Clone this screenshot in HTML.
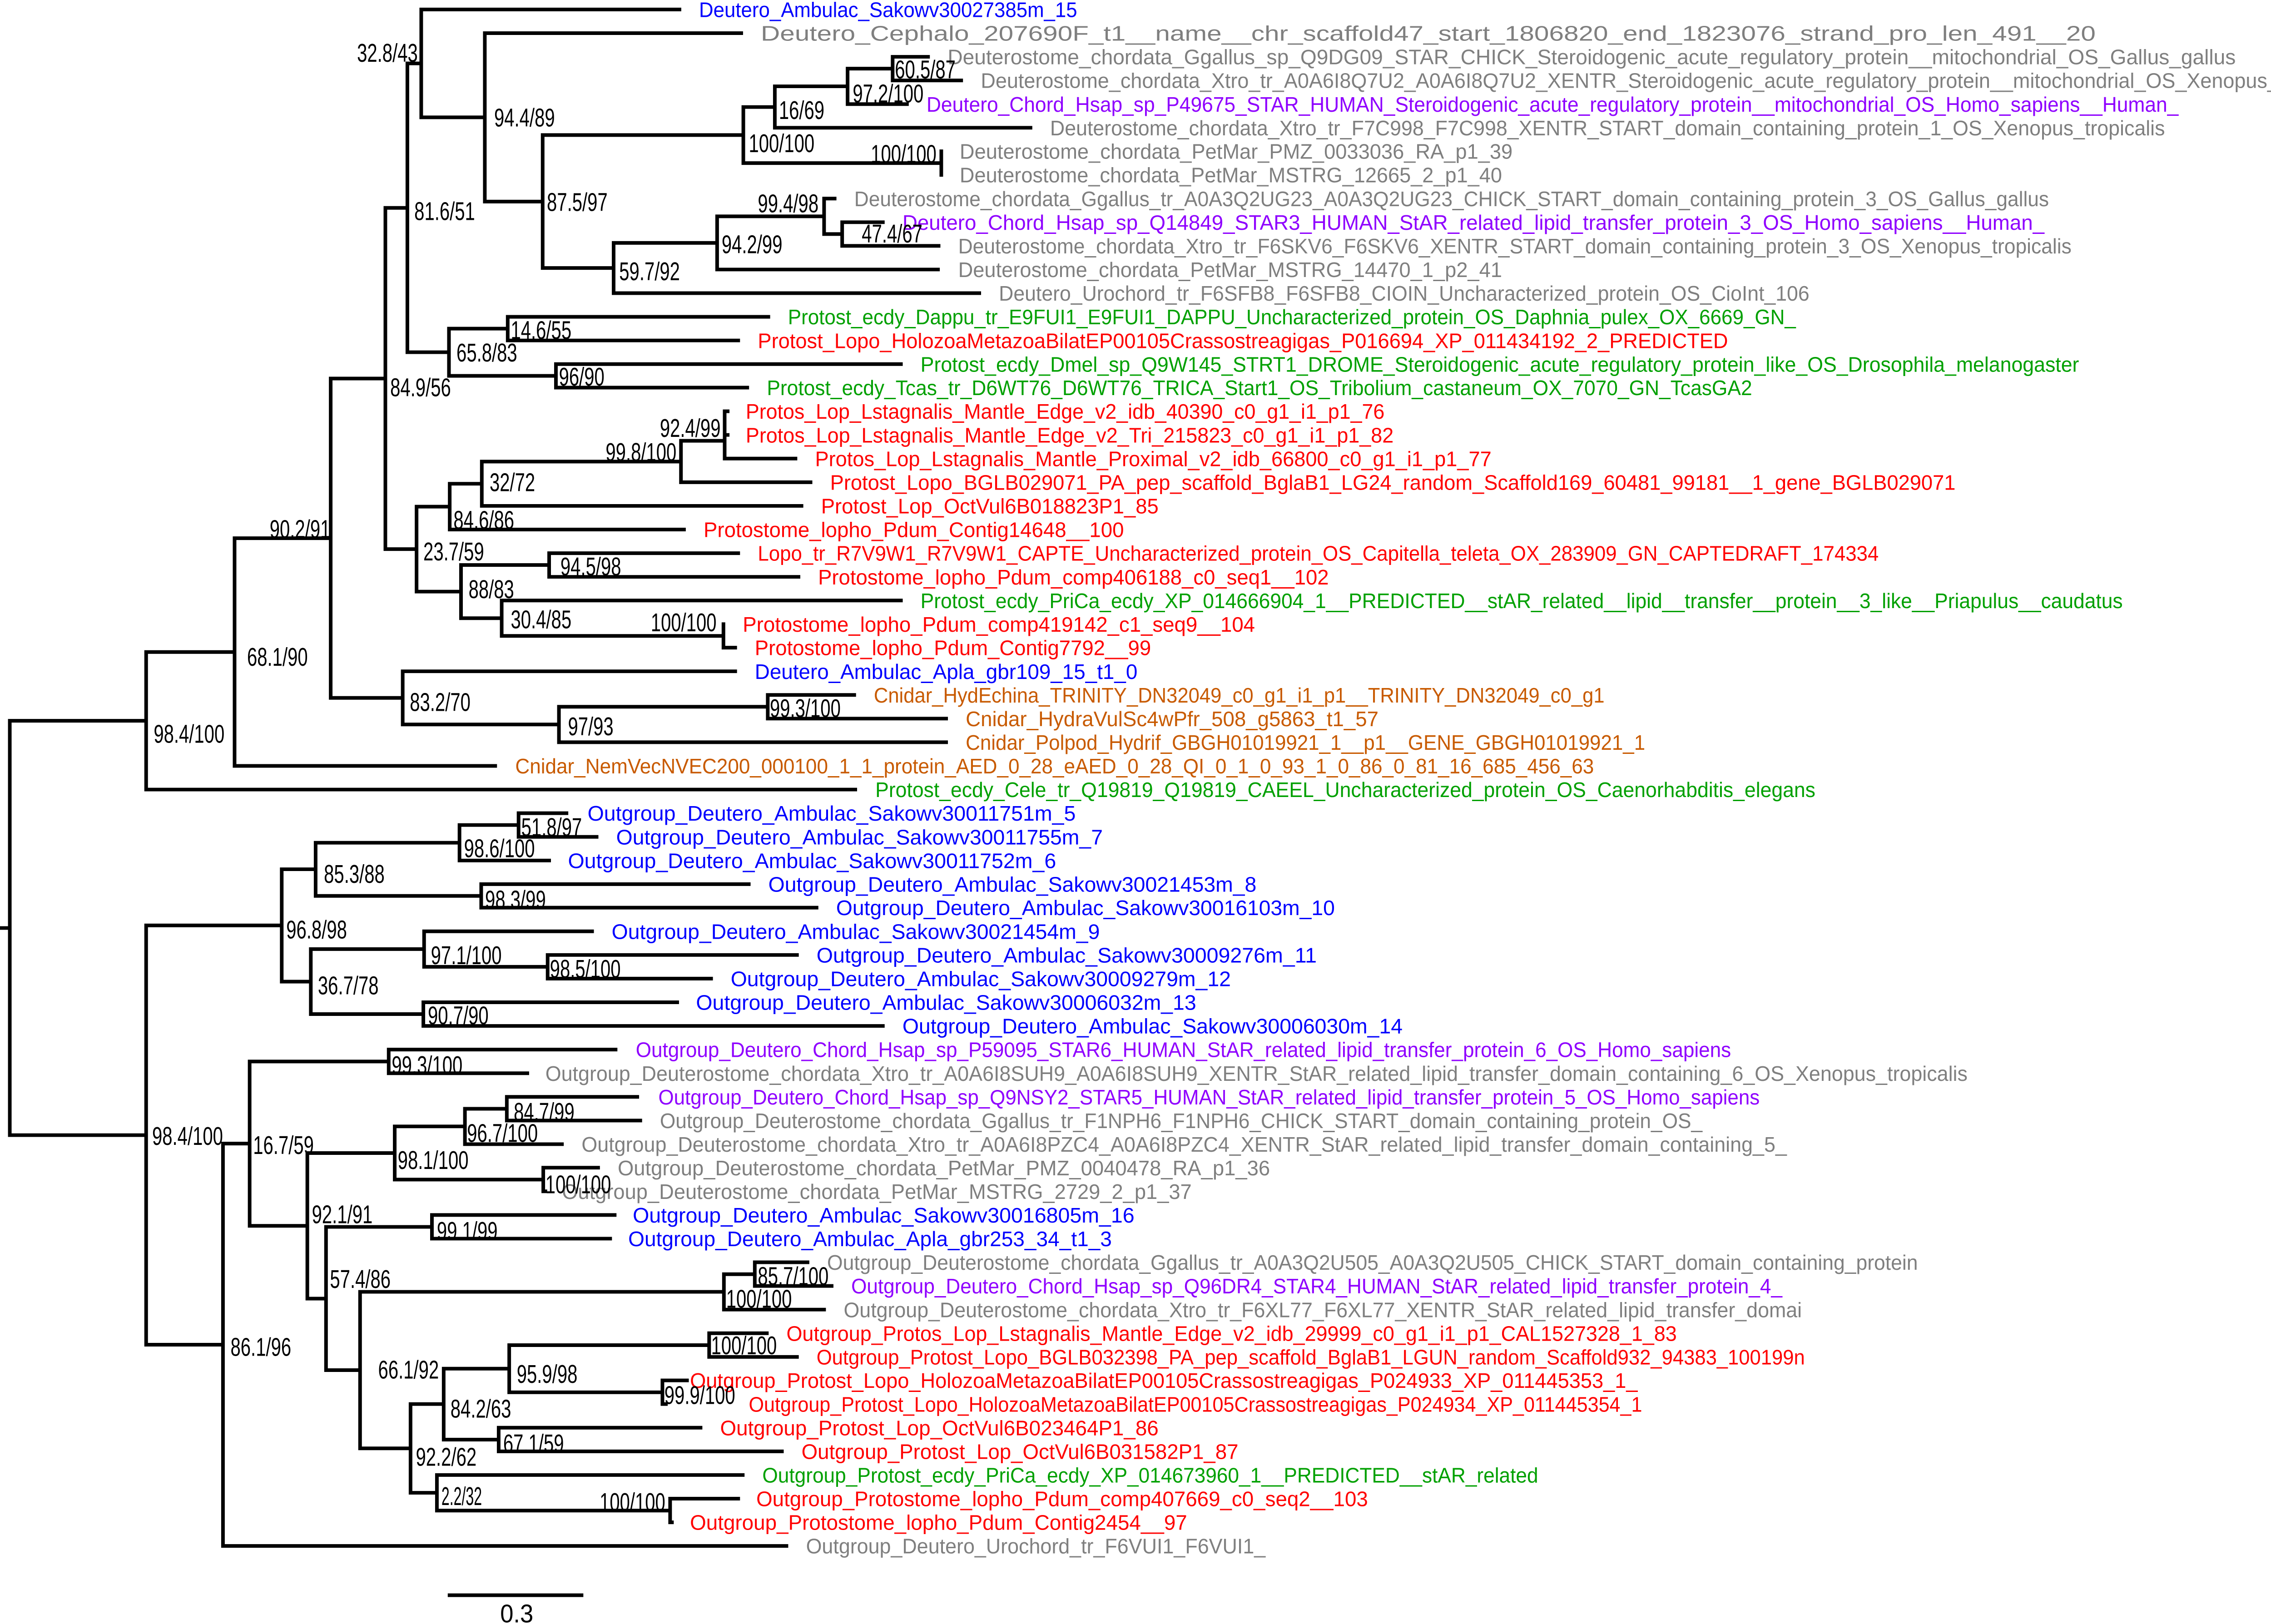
<!DOCTYPE html>
<html><head><meta charset="utf-8"><style>
html,body{margin:0;padding:0;background:#fff;}
svg{display:block;}
.l{font-family:"Liberation Sans",Arial,sans-serif;font-size:14px;}
.b{font-family:"Liberation Sans",Arial,sans-serif;font-size:17px;fill:#000;}
.bl{fill:#0000ff}.gr{fill:#7f7f7f}.pu{fill:#8f00ff}.gn{fill:#00a000}.rd{fill:#ff0000}.or{fill:#c85a00}
</style></head><body>
<svg width="5201" height="3576" viewBox="0 0 1568 1078" preserveAspectRatio="none" xmlns="http://www.w3.org/2000/svg">
<rect width="1568" height="1078" fill="#fff"/>
<path fill="none" stroke="#000" stroke-width="2.4" stroke-linecap="square" d="
M6.5 478.45V753.5M0 616H6.5
M97 432.8V524.1M155.7 357.25V508.4M219.5 251.25V463.25M255.8 138V364.5M270.4 42.1V233.8M279.6 6.3V77.9M321.8 22V133.8M360.2 89.65V177.9M493.4 71.05V108.25M514.3 57.3V84.8M562.6 45.55V69.1M592.5 37.7V53.4M624.8 100.4V116.1M407.3 161.25V194.6M476 143.6V178.9M547 131.8V155.35M559 147.5V163.2M298 218.15V249.5M337 210.3V226M369 241.7V257.3M276.5 336.3V392.7M298.5 321.1V351.5M319.8 306.4V335.8M452 292.6V320.1M481 273V304.4M306 375.05V410.35M364.5 367.2V382.9M333 398.6V422.1M480.2 414.3V429.9M267.3 445.6V480.9M371 469.15V492.7M509.6 461.3V477
M6.5 478.45H97M97 432.8H155.7M97 524.1H567.7M155.7 357.25H219.5M155.7 508.4H328.7M219.5 251.25H255.8M219.5 463.25H267.3M255.8 138H270.4M255.8 364.5H276.5M270.4 42.1H279.6M270.4 233.8H298M279.6 6.3H451M279.6 77.9H321.8M321.8 22H492M321.8 133.8H360.2M360.2 89.65H493.4M360.2 177.9H407.3M493.4 71.05H514.3M493.4 108.25H624.8M514.3 57.3H562.6M514.3 84.8H684M562.6 45.55H592.5M562.6 69.1H602M592.5 37.7H616M592.5 53.4H638M407.3 161.25H476M407.3 194.6H650M476 143.6H547M476 178.9H622.6M547 131.8H554M547 155.35H559M559 147.5H586M559 163.2H623M298 218.15H337M298 249.5H369M337 210.3H510M337 226H490M369 241.7H598M369 257.3H496M276.5 336.3H298.5M276.5 392.7H306M298.5 321.1H319.8M298.5 351.5H454M319.8 306.4H452M319.8 335.8H532M452 292.6H481M452 320.1H538M481 304.4H528M481 273H483M481 288.7H483M306 375.05H364.5M306 410.35H333M364.5 367.2H490M364.5 382.9H530M333 398.6H598M333 422.1H480.2M480.2 429.9H488M267.3 445.6H488M267.3 480.9H371M371 469.15H509.6M371 492.7H628M509.6 461.3H567M509.6 477H628
M97 614.3V892.6M187 577V651.6M209.5 559.4V594.7M305 547.65V571.2M344.2 539.8V555.5M319.4 586.9V602.5M206.3 630V673.15M281.5 618.2V641.75M363.5 633.9V649.6M281 665.3V681M148 759.1V1026.2M165.7 704.6V813.7M258 696.7V712.4M204 765.4V862M262 747.7V783M308.6 736V759.5M336.4 728.1V743.8M360.6 775.1V790.8M216.4 814.4V909.5M286.7 806.5V822.2M239 857.5V961.4M480.5 845.8V869.3M501 837.9V853.6M272.5 932V990.9M294.5 908.5V955.6M338 892.9V924.2M470.7 885V900.7M439.7 916.3V932M331 947.7V963.4M290 979.1V1002.7M444.8 994.8V1010.5
M6.5 753.5H97M97 614.3H187M97 892.6H148M187 577H209.5M187 651.6H206.3M209.5 559.4H305M209.5 594.7H319.4M305 547.65H344.2M305 571.2H364.5M344.2 539.8H376M344.2 555.5H396M319.4 586.9H497M319.4 602.5H542M206.3 630H281.5M206.3 673.15H281M281.5 618.2H393M281.5 641.75H363.5M363.5 633.9H529M363.5 649.6H472M281 665.3H449.5M281 681H586M148 759.1H165.7M148 1026.2H522M165.7 704.6H258M165.7 813.7H204M258 696.7H408.6M258 712.4H350M204 765.4H262M204 862H216.4M262 747.7H308.6M262 783H360.6M308.6 736H336.4M308.6 759.5H373M336.4 728.1H423M336.4 743.8H425M360.6 775.1H397M360.6 790.8H362M216.4 814.4H286.7M216.4 909.5H239M286.7 806.5H408M286.7 822.2H405M239 857.5H480.5M239 961.4H272.5M480.5 845.8H501M480.5 869.3H547M501 837.9H536M501 853.6H552M272.5 932H294.5M272.5 990.9H290M294.5 908.5H338M294.5 955.6H331M338 892.9H470.7M338 924.2H439.7M470.7 885H509M470.7 900.7H529M439.7 916.3H456M439.7 932H442M331 947.7H465M331 963.4H519M290 979.1H493M290 1002.7H444.8M444.8 994.8H490M444.8 1010.5H446
M298.4 1058.9H386"/>
<g class="l">
<text class="bl" x="464" y="11.3" textLength="251" lengthAdjust="spacingAndGlyphs">Deutero_Ambulac_Sakowv30027385m_15</text>
<text class="gr" x="505" y="27" textLength="886" lengthAdjust="spacingAndGlyphs">Deutero_Cephalo_207690F_t1__name__chr_scaffold47_start_1806820_end_1823076_strand_pro_len_491__20</text>
<text class="gr" x="629" y="42.7" textLength="855" lengthAdjust="spacingAndGlyphs">Deuterostome_chordata_Ggallus_sp_Q9DG09_STAR_CHICK_Steroidogenic_acute_regulatory_protein__mitochondrial_OS_Gallus_gallus</text>
<text class="gr" x="651" y="58.4" textLength="915" lengthAdjust="spacingAndGlyphs">Deuterostome_chordata_Xtro_tr_A0A6I8Q7U2_A0A6I8Q7U2_XENTR_Steroidogenic_acute_regulatory_protein__mitochondrial_OS_Xenopus_tropicalis</text>
<text class="pu" x="615" y="74.1" textLength="831" lengthAdjust="spacingAndGlyphs">Deutero_Chord_Hsap_sp_P49675_STAR_HUMAN_Steroidogenic_acute_regulatory_protein__mitochondrial_OS_Homo_sapiens__Human_</text>
<text class="gr" x="697" y="89.8" textLength="740" lengthAdjust="spacingAndGlyphs">Deuterostome_chordata_Xtro_tr_F7C998_F7C998_XENTR_START_domain_containing_protein_1_OS_Xenopus_tropicalis</text>
<text class="gr" x="637" y="105.4" textLength="367" lengthAdjust="spacingAndGlyphs">Deuterostome_chordata_PetMar_PMZ_0033036_RA_p1_39</text>
<text class="gr" x="637" y="121.1" textLength="360" lengthAdjust="spacingAndGlyphs">Deuterostome_chordata_PetMar_MSTRG_12665_2_p1_40</text>
<text class="gr" x="567" y="136.8" textLength="793" lengthAdjust="spacingAndGlyphs">Deuterostome_chordata_Ggallus_tr_A0A3Q2UG23_A0A3Q2UG23_CHICK_START_domain_containing_protein_3_OS_Gallus_gallus</text>
<text class="pu" x="599" y="152.5" textLength="758" lengthAdjust="spacingAndGlyphs">Deutero_Chord_Hsap_sp_Q14849_STAR3_HUMAN_StAR_related_lipid_transfer_protein_3_OS_Homo_sapiens__Human_</text>
<text class="gr" x="636" y="168.2" textLength="739" lengthAdjust="spacingAndGlyphs">Deuterostome_chordata_Xtro_tr_F6SKV6_F6SKV6_XENTR_START_domain_containing_protein_3_OS_Xenopus_tropicalis</text>
<text class="gr" x="636" y="183.9" textLength="361" lengthAdjust="spacingAndGlyphs">Deuterostome_chordata_PetMar_MSTRG_14470_1_p2_41</text>
<text class="gr" x="663" y="199.6" textLength="538" lengthAdjust="spacingAndGlyphs">Deutero_Urochord_tr_F6SFB8_F6SFB8_CIOIN_Uncharacterized_protein_OS_CioInt_106</text>
<text class="gn" x="523" y="215.3" textLength="669" lengthAdjust="spacingAndGlyphs">Protost_ecdy_Dappu_tr_E9FUI1_E9FUI1_DAPPU_Uncharacterized_protein_OS_Daphnia_pulex_OX_6669_GN_</text>
<text class="rd" x="503" y="231" textLength="644" lengthAdjust="spacingAndGlyphs">Protost_Lopo_HolozoaMetazoaBilatEP00105Crassostreagigas_P016694_XP_011434192_2_PREDICTED</text>
<text class="gn" x="611" y="246.7" textLength="769" lengthAdjust="spacingAndGlyphs">Protost_ecdy_Dmel_sp_Q9W145_STRT1_DROME_Steroidogenic_acute_regulatory_protein_like_OS_Drosophila_melanogaster</text>
<text class="gn" x="509" y="262.3" textLength="654" lengthAdjust="spacingAndGlyphs">Protost_ecdy_Tcas_tr_D6WT76_D6WT76_TRICA_Start1_OS_Tribolium_castaneum_OX_7070_GN_TcasGA2</text>
<text class="rd" x="495" y="278" textLength="424" lengthAdjust="spacingAndGlyphs">Protos_Lop_Lstagnalis_Mantle_Edge_v2_idb_40390_c0_g1_i1_p1_76</text>
<text class="rd" x="495" y="293.7" textLength="430" lengthAdjust="spacingAndGlyphs">Protos_Lop_Lstagnalis_Mantle_Edge_v2_Tri_215823_c0_g1_i1_p1_82</text>
<text class="rd" x="541" y="309.4" textLength="449" lengthAdjust="spacingAndGlyphs">Protos_Lop_Lstagnalis_Mantle_Proximal_v2_idb_66800_c0_g1_i1_p1_77</text>
<text class="rd" x="551" y="325.1" textLength="747" lengthAdjust="spacingAndGlyphs">Protost_Lopo_BGLB029071_PA_pep_scaffold_BglaB1_LG24_random_Scaffold169_60481_99181__1_gene_BGLB029071</text>
<text class="rd" x="545" y="340.8" textLength="224" lengthAdjust="spacingAndGlyphs">Protost_Lop_OctVul6B018823P1_85</text>
<text class="rd" x="467" y="356.5" textLength="279" lengthAdjust="spacingAndGlyphs">Protostome_lopho_Pdum_Contig14648__100</text>
<text class="rd" x="503" y="372.2" textLength="744" lengthAdjust="spacingAndGlyphs">Lopo_tr_R7V9W1_R7V9W1_CAPTE_Uncharacterized_protein_OS_Capitella_teleta_OX_283909_GN_CAPTEDRAFT_174334</text>
<text class="rd" x="543" y="387.9" textLength="339" lengthAdjust="spacingAndGlyphs">Protostome_lopho_Pdum_comp406188_c0_seq1__102</text>
<text class="gn" x="611" y="403.6" textLength="798" lengthAdjust="spacingAndGlyphs">Protost_ecdy_PriCa_ecdy_XP_014666904_1__PREDICTED__stAR_related__lipid__transfer__protein__3_like__Priapulus__caudatus</text>
<text class="rd" x="493" y="419.3" textLength="340" lengthAdjust="spacingAndGlyphs">Protostome_lopho_Pdum_comp419142_c1_seq9__104</text>
<text class="rd" x="501" y="434.9" textLength="263" lengthAdjust="spacingAndGlyphs">Protostome_lopho_Pdum_Contig7792__99</text>
<text class="bl" x="501" y="450.6" textLength="254" lengthAdjust="spacingAndGlyphs">Deutero_Ambulac_Apla_gbr109_15_t1_0</text>
<text class="or" x="580" y="466.3" textLength="485" lengthAdjust="spacingAndGlyphs">Cnidar_HydEchina_TRINITY_DN32049_c0_g1_i1_p1__TRINITY_DN32049_c0_g1</text>
<text class="or" x="641" y="482" textLength="274" lengthAdjust="spacingAndGlyphs">Cnidar_HydraVulSc4wPfr_508_g5863_t1_57</text>
<text class="or" x="641" y="497.7" textLength="451" lengthAdjust="spacingAndGlyphs">Cnidar_Polpod_Hydrif_GBGH01019921_1__p1__GENE_GBGH01019921_1</text>
<text class="or" x="342" y="513.4" textLength="716" lengthAdjust="spacingAndGlyphs">Cnidar_NemVecNVEC200_000100_1_1_protein_AED_0_28_eAED_0_28_QI_0_1_0_93_1_0_86_0_81_16_685_456_63</text>
<text class="gn" x="581" y="529.1" textLength="624" lengthAdjust="spacingAndGlyphs">Protost_ecdy_Cele_tr_Q19819_Q19819_CAEEL_Uncharacterized_protein_OS_Caenorhabditis_elegans</text>
<text class="bl" x="390" y="544.8" textLength="324" lengthAdjust="spacingAndGlyphs">Outgroup_Deutero_Ambulac_Sakowv30011751m_5</text>
<text class="bl" x="409" y="560.5" textLength="323" lengthAdjust="spacingAndGlyphs">Outgroup_Deutero_Ambulac_Sakowv30011755m_7</text>
<text class="bl" x="377" y="576.2" textLength="324" lengthAdjust="spacingAndGlyphs">Outgroup_Deutero_Ambulac_Sakowv30011752m_6</text>
<text class="bl" x="510" y="591.9" textLength="324" lengthAdjust="spacingAndGlyphs">Outgroup_Deutero_Ambulac_Sakowv30021453m_8</text>
<text class="bl" x="555" y="607.5" textLength="331" lengthAdjust="spacingAndGlyphs">Outgroup_Deutero_Ambulac_Sakowv30016103m_10</text>
<text class="bl" x="406" y="623.2" textLength="324" lengthAdjust="spacingAndGlyphs">Outgroup_Deutero_Ambulac_Sakowv30021454m_9</text>
<text class="bl" x="542" y="638.9" textLength="332" lengthAdjust="spacingAndGlyphs">Outgroup_Deutero_Ambulac_Sakowv30009276m_11</text>
<text class="bl" x="485" y="654.6" textLength="332" lengthAdjust="spacingAndGlyphs">Outgroup_Deutero_Ambulac_Sakowv30009279m_12</text>
<text class="bl" x="462" y="670.3" textLength="332" lengthAdjust="spacingAndGlyphs">Outgroup_Deutero_Ambulac_Sakowv30006032m_13</text>
<text class="bl" x="599" y="686" textLength="332" lengthAdjust="spacingAndGlyphs">Outgroup_Deutero_Ambulac_Sakowv30006030m_14</text>
<text class="pu" x="422" y="701.7" textLength="727" lengthAdjust="spacingAndGlyphs">Outgroup_Deutero_Chord_Hsap_sp_P59095_STAR6_HUMAN_StAR_related_lipid_transfer_protein_6_OS_Homo_sapiens</text>
<text class="gr" x="362" y="717.4" textLength="944" lengthAdjust="spacingAndGlyphs">Outgroup_Deuterostome_chordata_Xtro_tr_A0A6I8SUH9_A0A6I8SUH9_XENTR_StAR_related_lipid_transfer_domain_containing_6_OS_Xenopus_tropicalis</text>
<text class="pu" x="437" y="733.1" textLength="731" lengthAdjust="spacingAndGlyphs">Outgroup_Deutero_Chord_Hsap_sp_Q9NSY2_STAR5_HUMAN_StAR_related_lipid_transfer_protein_5_OS_Homo_sapiens</text>
<text class="gr" x="438" y="748.8" textLength="692" lengthAdjust="spacingAndGlyphs">Outgroup_Deuterostome_chordata_Ggallus_tr_F1NPH6_F1NPH6_CHICK_START_domain_containing_protein_OS_</text>
<text class="gr" x="386" y="764.5" textLength="800" lengthAdjust="spacingAndGlyphs">Outgroup_Deuterostome_chordata_Xtro_tr_A0A6I8PZC4_A0A6I8PZC4_XENTR_StAR_related_lipid_transfer_domain_containing_5_</text>
<text class="gr" x="410" y="780.1" textLength="433" lengthAdjust="spacingAndGlyphs">Outgroup_Deuterostome_chordata_PetMar_PMZ_0040478_RA_p1_36</text>
<text class="gr" x="373" y="795.8" textLength="418" lengthAdjust="spacingAndGlyphs">Outgroup_Deuterostome_chordata_PetMar_MSTRG_2729_2_p1_37</text>
<text class="bl" x="420" y="811.5" textLength="333" lengthAdjust="spacingAndGlyphs">Outgroup_Deutero_Ambulac_Sakowv30016805m_16</text>
<text class="bl" x="417" y="827.2" textLength="321" lengthAdjust="spacingAndGlyphs">Outgroup_Deutero_Ambulac_Apla_gbr253_34_t1_3</text>
<text class="gr" x="549" y="842.9" textLength="724" lengthAdjust="spacingAndGlyphs">Outgroup_Deuterostome_chordata_Ggallus_tr_A0A3Q2U505_A0A3Q2U505_CHICK_START_domain_containing_protein</text>
<text class="pu" x="565" y="858.6" textLength="618" lengthAdjust="spacingAndGlyphs">Outgroup_Deutero_Chord_Hsap_sp_Q96DR4_STAR4_HUMAN_StAR_related_lipid_transfer_protein_4_</text>
<text class="gr" x="560" y="874.3" textLength="636" lengthAdjust="spacingAndGlyphs">Outgroup_Deuterostome_chordata_Xtro_tr_F6XL77_F6XL77_XENTR_StAR_related_lipid_transfer_domai</text>
<text class="rd" x="522" y="890" textLength="591" lengthAdjust="spacingAndGlyphs">Outgroup_Protos_Lop_Lstagnalis_Mantle_Edge_v2_idb_29999_c0_g1_i1_p1_CAL1527328_1_83</text>
<text class="rd" x="542" y="905.7" textLength="656" lengthAdjust="spacingAndGlyphs">Outgroup_Protost_Lopo_BGLB032398_PA_pep_scaffold_BglaB1_LGUN_random_Scaffold932_94383_100199n</text>
<text class="rd" x="458" y="921.3" textLength="629" lengthAdjust="spacingAndGlyphs">Outgroup_Protost_Lopo_HolozoaMetazoaBilatEP00105Crassostreagigas_P024933_XP_011445353_1_</text>
<text class="rd" x="497" y="937" textLength="593" lengthAdjust="spacingAndGlyphs">Outgroup_Protost_Lopo_HolozoaMetazoaBilatEP00105Crassostreagigas_P024934_XP_011445354_1</text>
<text class="rd" x="478" y="952.7" textLength="291" lengthAdjust="spacingAndGlyphs">Outgroup_Protost_Lop_OctVul6B023464P1_86</text>
<text class="rd" x="532" y="968.4" textLength="290" lengthAdjust="spacingAndGlyphs">Outgroup_Protost_Lop_OctVul6B031582P1_87</text>
<text class="gn" x="506" y="984.1" textLength="515" lengthAdjust="spacingAndGlyphs">Outgroup_Protost_ecdy_PriCa_ecdy_XP_014673960_1__PREDICTED__stAR_related</text>
<text class="rd" x="502" y="999.8" textLength="406" lengthAdjust="spacingAndGlyphs">Outgroup_Protostome_lopho_Pdum_comp407669_c0_seq2__103</text>
<text class="rd" x="458" y="1015.5" textLength="330" lengthAdjust="spacingAndGlyphs">Outgroup_Protostome_lopho_Pdum_Contig2454__97</text>
<text class="gr" x="535" y="1031.2" textLength="305" lengthAdjust="spacingAndGlyphs">Outgroup_Deutero_Urochord_tr_F6VUI1_F6VUI1_</text>
</g>
<g class="b">
<text x="237" y="41" textLength="40.3" lengthAdjust="spacingAndGlyphs">32.8/43</text>
<text x="328" y="84" textLength="40.3" lengthAdjust="spacingAndGlyphs">94.4/89</text>
<text x="275" y="146" textLength="40.3" lengthAdjust="spacingAndGlyphs">81.6/51</text>
<text x="363" y="140" textLength="40.3" lengthAdjust="spacingAndGlyphs">87.5/97</text>
<text x="517" y="79" textLength="30.2" lengthAdjust="spacingAndGlyphs">16/69</text>
<text x="497" y="101" textLength="43.6" lengthAdjust="spacingAndGlyphs">100/100</text>
<text x="594" y="52" textLength="40.3" lengthAdjust="spacingAndGlyphs">60.5/87</text>
<text x="566" y="68" textLength="47" lengthAdjust="spacingAndGlyphs">97.2/100</text>
<text x="578" y="108" textLength="43.6" lengthAdjust="spacingAndGlyphs">100/100</text>
<text x="503" y="141" textLength="40.3" lengthAdjust="spacingAndGlyphs">99.4/98</text>
<text x="572" y="161" textLength="40.3" lengthAdjust="spacingAndGlyphs">47.4/67</text>
<text x="479" y="168" textLength="40.3" lengthAdjust="spacingAndGlyphs">94.2/99</text>
<text x="411" y="186" textLength="40.3" lengthAdjust="spacingAndGlyphs">59.7/92</text>
<text x="339" y="225" textLength="40.3" lengthAdjust="spacingAndGlyphs">14.6/55</text>
<text x="303" y="240" textLength="40.3" lengthAdjust="spacingAndGlyphs">65.8/83</text>
<text x="371" y="256" textLength="30.2" lengthAdjust="spacingAndGlyphs">96/90</text>
<text x="259" y="263" textLength="40.3" lengthAdjust="spacingAndGlyphs">84.9/56</text>
<text x="438" y="290" textLength="40.3" lengthAdjust="spacingAndGlyphs">92.4/99</text>
<text x="402" y="306" textLength="47" lengthAdjust="spacingAndGlyphs">99.8/100</text>
<text x="325" y="326" textLength="30.2" lengthAdjust="spacingAndGlyphs">32/72</text>
<text x="301" y="351" textLength="40.3" lengthAdjust="spacingAndGlyphs">84.6/86</text>
<text x="281" y="372" textLength="40.3" lengthAdjust="spacingAndGlyphs">23.7/59</text>
<text x="372" y="382" textLength="40.3" lengthAdjust="spacingAndGlyphs">94.5/98</text>
<text x="311" y="397" textLength="30.2" lengthAdjust="spacingAndGlyphs">88/83</text>
<text x="339" y="417" textLength="40.3" lengthAdjust="spacingAndGlyphs">30.4/85</text>
<text x="432" y="419" textLength="43.6" lengthAdjust="spacingAndGlyphs">100/100</text>
<text x="179" y="357" textLength="40.3" lengthAdjust="spacingAndGlyphs">90.2/91</text>
<text x="164" y="442" textLength="40.3" lengthAdjust="spacingAndGlyphs">68.1/90</text>
<text x="272" y="472" textLength="40.3" lengthAdjust="spacingAndGlyphs">83.2/70</text>
<text x="511" y="476" textLength="47" lengthAdjust="spacingAndGlyphs">99.3/100</text>
<text x="377" y="488" textLength="30.2" lengthAdjust="spacingAndGlyphs">97/93</text>
<text x="102" y="493" textLength="47" lengthAdjust="spacingAndGlyphs">98.4/100</text>
<text x="346" y="555" textLength="40.3" lengthAdjust="spacingAndGlyphs">51.8/97</text>
<text x="308" y="569" textLength="47" lengthAdjust="spacingAndGlyphs">98.6/100</text>
<text x="215" y="586" textLength="40.3" lengthAdjust="spacingAndGlyphs">85.3/88</text>
<text x="322" y="603" textLength="40.3" lengthAdjust="spacingAndGlyphs">98.3/99</text>
<text x="190" y="623" textLength="40.3" lengthAdjust="spacingAndGlyphs">96.8/98</text>
<text x="286" y="640" textLength="47" lengthAdjust="spacingAndGlyphs">97.1/100</text>
<text x="365" y="649" textLength="47" lengthAdjust="spacingAndGlyphs">98.5/100</text>
<text x="211" y="660" textLength="40.3" lengthAdjust="spacingAndGlyphs">36.7/78</text>
<text x="284" y="680" textLength="40.3" lengthAdjust="spacingAndGlyphs">90.7/90</text>
<text x="260" y="713" textLength="47" lengthAdjust="spacingAndGlyphs">99.3/100</text>
<text x="341" y="744" textLength="40.3" lengthAdjust="spacingAndGlyphs">84.7/99</text>
<text x="310" y="758" textLength="47" lengthAdjust="spacingAndGlyphs">96.7/100</text>
<text x="168" y="766" textLength="40.3" lengthAdjust="spacingAndGlyphs">16.7/59</text>
<text x="264" y="776" textLength="47" lengthAdjust="spacingAndGlyphs">98.1/100</text>
<text x="362" y="792" textLength="43.6" lengthAdjust="spacingAndGlyphs">100/100</text>
<text x="101" y="760" textLength="47" lengthAdjust="spacingAndGlyphs">98.4/100</text>
<text x="207" y="812" textLength="40.3" lengthAdjust="spacingAndGlyphs">92.1/91</text>
<text x="290" y="823" textLength="40.3" lengthAdjust="spacingAndGlyphs">99.1/99</text>
<text x="219" y="855" textLength="40.3" lengthAdjust="spacingAndGlyphs">57.4/86</text>
<text x="503" y="853" textLength="47" lengthAdjust="spacingAndGlyphs">85.7/100</text>
<text x="482" y="868" textLength="43.6" lengthAdjust="spacingAndGlyphs">100/100</text>
<text x="153" y="900" textLength="40.3" lengthAdjust="spacingAndGlyphs">86.1/96</text>
<text x="472" y="899" textLength="43.6" lengthAdjust="spacingAndGlyphs">100/100</text>
<text x="251" y="915" textLength="40.3" lengthAdjust="spacingAndGlyphs">66.1/92</text>
<text x="343" y="918" textLength="40.3" lengthAdjust="spacingAndGlyphs">95.9/98</text>
<text x="441" y="932" textLength="47" lengthAdjust="spacingAndGlyphs">99.9/100</text>
<text x="299" y="941" textLength="40.3" lengthAdjust="spacingAndGlyphs">84.2/63</text>
<text x="334" y="964" textLength="40.3" lengthAdjust="spacingAndGlyphs">67.1/59</text>
<text x="276" y="973" textLength="40.3" lengthAdjust="spacingAndGlyphs">92.2/62</text>
<text x="293" y="999" textLength="26.9" lengthAdjust="spacingAndGlyphs">2.2/32</text>
<text x="398" y="1003" textLength="43.6" lengthAdjust="spacingAndGlyphs">100/100</text>
<text x="332" y="1077" textLength="22" lengthAdjust="spacingAndGlyphs">0.3</text>
</g>
</svg>
</body></html>
